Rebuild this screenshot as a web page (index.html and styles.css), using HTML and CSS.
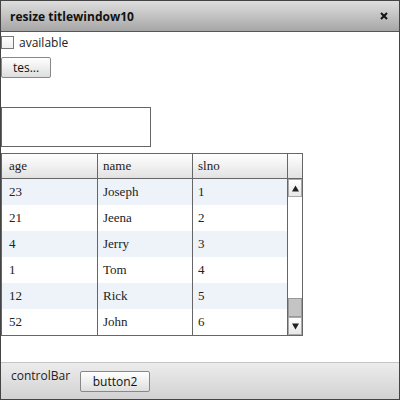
FILE: index.html
```html
<!DOCTYPE html>
<html>
<head>
<meta charset="utf-8">
<link rel="stylesheet" href="styles.css">
</head>
<body>
<div class="window">
  <div class="titlebar">
    <span class="title">resize titlewindow10</span>
    <svg class="close" width="8" height="8" viewBox="0 0 8 8"><path d="M1 1L7 7M7 1L1 7" stroke="#111" stroke-width="2"/></svg>
  </div>
  <div class="content">
    <label class="check-row"><span class="checkbox"></span><span class="check-label">available</span></label>
    <button class="btn btn-tes">tes...</button>
    <div class="textinput"></div>
    <div class="grid">
      <div class="row header">
        <div class="cell c1">age</div>
        <div class="cell c2">name</div>
        <div class="cell c3">slno</div>
        <div class="cell c4"></div>
      </div>
      <div class="body">
        <div class="rows">
          <div class="row odd"><div class="cell c1">23</div><div class="cell c2">Joseph</div><div class="cell c3">1</div></div>
          <div class="row"><div class="cell c1">21</div><div class="cell c2">Jeena</div><div class="cell c3">2</div></div>
          <div class="row odd"><div class="cell c1">4</div><div class="cell c2">Jerry</div><div class="cell c3">3</div></div>
          <div class="row"><div class="cell c1">1</div><div class="cell c2">Tom</div><div class="cell c3">4</div></div>
          <div class="row odd"><div class="cell c1">12</div><div class="cell c2">Rick</div><div class="cell c3">5</div></div>
          <div class="row"><div class="cell c1">52</div><div class="cell c2">John</div><div class="cell c3">6</div></div>
        </div>
        <div class="scrollbar">
          <div class="sb-btn"><svg width="7" height="7" viewBox="0 0 7 7"><path d="M3.5 0.5L7 6.5H0Z" fill="#222"/></svg></div>
          <div class="sb-track"><div class="sb-thumb"></div></div>
          <div class="sb-btn"><svg width="7" height="7" viewBox="0 0 7 7"><path d="M0 0.5H7L3.5 6.5Z" fill="#222"/></svg></div>
        </div>
      </div>
    </div>
  </div>
  <div class="controlbar">
    <span class="cb-label">controlBar</span>
    <button class="btn btn-2">button2</button>
  </div>
</div>
</body>
</html>
```
FILE: styles.css
```css
html, body {
  margin: 0;
  padding: 0;
  background: #fff;
}
.window {
  width: 400px;
  height: 400px;
  box-sizing: border-box;
  border: 1px solid #444;
  display: flex;
  flex-direction: column;
  font-family: "Open Sans", "Noto Sans", sans-serif;
  background: #fff;
}
.titlebar {
  height: 30px;
  border-bottom: 1px solid #555;
  background: linear-gradient(#dedede, #a6a6a6);
  display: flex;
  align-items: center;
  justify-content: space-between;
  padding: 0 11px 0 9px;
}
.title {
  font-weight: bold;
  font-size: 12px;
  color: #111;
}
.close {
  display: block;
}
.content {
  flex: 1;
  display: flex;
  flex-direction: column;
  align-items: flex-start;
}
.check-row {
  display: flex;
  align-items: center;
  margin-top: 4px;
  height: 13px;
}
.checkbox {
  width: 11px;
  height: 11px;
  border: 1px solid #777;
  background: linear-gradient(#fff, #eee);
}
.check-label {
  font-size: 12px;
  color: #222;
  margin-left: 5px;
}
.btn {
  font-family: "Open Sans", "Noto Sans", sans-serif;
  font-size: 12px;
  color: #111;
  border: 1px solid #888;
  border-radius: 2px;
  background: linear-gradient(#fff, #dedede);
  padding: 0;
  height: 21px;
  box-sizing: border-box;
}
.btn-tes {
  width: 50px;
  margin-top: 8px;
}
.textinput {
  width: 150px;
  height: 40px;
  box-sizing: border-box;
  border: 1px solid #666;
  margin-top: 29px;
}
.grid {
  margin-top: 6px;
  width: 302px;
  box-sizing: border-box;
  border: 1px solid #666;
  font-family: "Liberation Serif", serif;
  font-size: 13px;
  color: #222;
}
.row {
  display: flex;
  height: 26px;
}
.header {
  height: 24px;
  border-bottom: 1px solid #666;
  background: linear-gradient(#fff, #e2e2e2);
}
.cell {
  box-sizing: border-box;
  display: flex;
  align-items: center;
  border-right: 1px solid #666;
}
.c1 { width: 96px; padding-left: 7px; }
.c2 { width: 95px; padding-left: 5px; }
.c3 { width: 95px; padding-left: 5px; }
.c4 { width: 14px; border-right: none; }
.body {
  display: flex;
}
.rows {
  display: flex;
  flex-direction: column;
}
.odd {
  background: #eef3fa;
}
.scrollbar {
  width: 14px;
  display: flex;
  flex-direction: column;
  background: #fff;
}
.sb-btn {
  height: 18px;
  box-sizing: border-box;
  border: 1px solid #aaa;
  background: linear-gradient(#fff, #e8e8e8);
  display: flex;
  align-items: center;
  justify-content: center;
}
.sb-track {
  flex: 1;
  display: flex;
  flex-direction: column;
  justify-content: flex-end;
}
.sb-thumb {
  height: 19px;
  box-sizing: border-box;
  border: 1px solid #999;
  background: #c4c4c4;
}
.controlbar {
  height: 37px;
  box-sizing: border-box;
  border-top: 1px solid #c4c4c4;
  background: linear-gradient(#ececec, #d2d2d2);
  display: flex;
  align-items: flex-start;
  padding-left: 10px;
}
.cb-label {
  font-size: 12px;
  color: #222;
  margin-top: 4px;
}
.btn-2 {
  width: 70px;
  margin-left: 10px;
  margin-top: 8px;
}
```
